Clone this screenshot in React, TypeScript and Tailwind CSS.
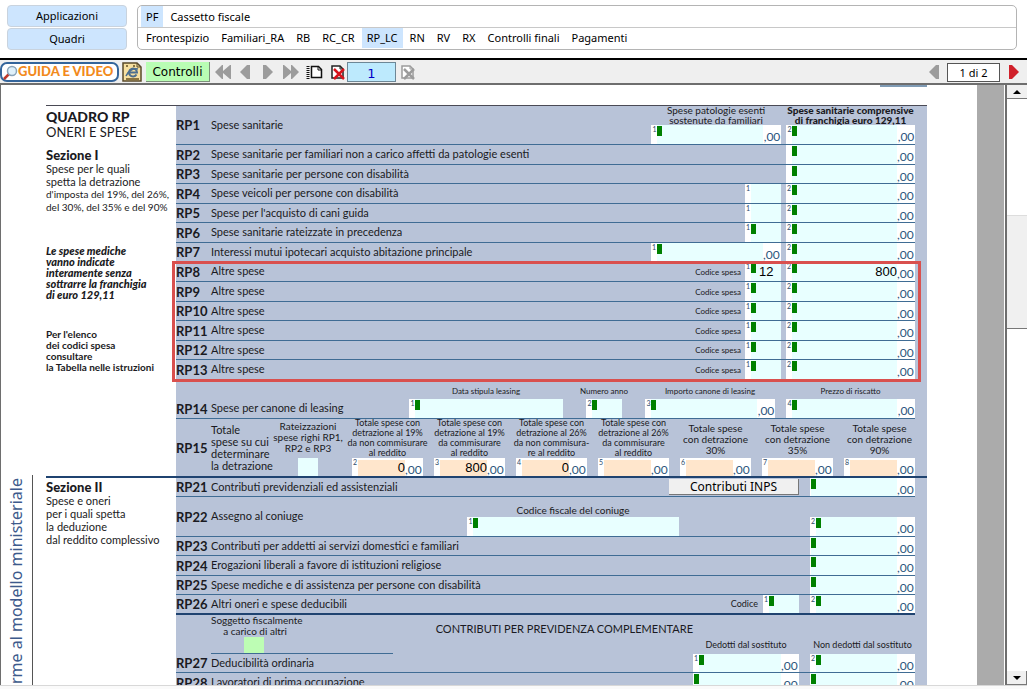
import type { ReactNode } from "react";

const MENU = ["PF", "Cassetto fiscale"];
const TABS = [
  "Frontespizio",
  "Familiari_RA",
  "RB",
  "RC_CR",
  "RP_LC",
  "RN",
  "RV",
  "RX",
  "Controlli finali",
  "Pagamenti",
];

const EXPENSES = [
  { code: "RP8", height: "h-5", codice: "12", amount: "800" },
  { code: "RP9", height: "h-5" },
  { code: "RP10", height: "h-[19px]" },
  { code: "RP11", height: "h-5" },
  { code: "RP12", height: "h-[19px]" },
  { code: "RP13", height: "h-5" },
];

const TOTALS = [
  { n: "2", value: "0", lines: ["Totale spese con", "detrazione al 19%", "da non commisurare", "al reddito"] },
  { n: "3", value: "800", lines: ["Totale spese con", "detrazione al 19%", "da commisurare", "al reddito"] },
  { n: "4", value: "0", lines: ["Totale spese con", "detrazione al 26%", "da non commisura-", "re al reddito"] },
  { n: "5", value: "", lines: ["Totale spese con", "detrazione al 26%", "da commisurare", "al reddito"] },
  { n: "6", value: "", lines: ["Totale spese", "con detrazione", "30%"] },
  { n: "7", value: "", lines: ["Totale spese", "con detrazione", "35%"] },
  { n: "8", value: "", lines: ["Totale spese", "con detrazione", "90%"] },
];

type FieldProps = {
  label: string;
  width: string;
  n?: string;
  value?: string;
  marker?: boolean;
  cents?: boolean;
  flush?: boolean;
};

function Field({ label, width, n, value, marker = true, cents = true, flush }: FieldProps) {
  return (
    <div className={`flex h-[19px] max-h-full shrink-0 bg-white ${width}`}>
      <span className={`shrink-0 pl-px text-[7px] leading-[8px] text-[#2b4a6b] ${flush ? "w-px" : "w-[6px]"}`}>{n}</span>
      <div className="flex min-w-0 flex-1 bg-[#e8ffff]">
        {marker && <span className="mt-px h-[10px] w-[5px] shrink-0 bg-[#008000]" />}
        <input
          aria-label={label}
          defaultValue={value}
          className={`w-full min-w-0 bg-transparent font-['Liberation_Sans',sans-serif] text-[13px] text-black outline-none ${
            cents ? "text-right" : "pl-[3px]"
          }`}
        />
      </div>
      {cents && <Cents />}
    </div>
  );
}

function Cents() {
  return <span className="w-[18px] shrink-0 pt-[5px] text-[12px] leading-[14px] text-[#2b567d]">,00</span>;
}

function TotalField({ label, n, value }: { label: string; n: string; value: string }) {
  return (
    <div className="flex h-[18px] w-[71px] bg-white">
      <span className="w-[6px] shrink-0 pl-px text-[7px] leading-[8px] text-[#2b4a6b]">{n}</span>
      <input
        aria-label={label}
        defaultValue={value}
        className="mt-[2px] w-full min-w-0 bg-[#ffe6cc] text-right font-['Liberation_Sans',sans-serif] text-[13px] text-black outline-none"
      />
      <Cents />
    </div>
  );
}

type RowProps = {
  code: string;
  label: string;
  height: string;
  line?: string;
  children?: ReactNode;
};

function Row({ code, label, height, line = "border-b border-[#3f6c94]", children }: RowProps) {
  return (
    <div className={`flex items-end ${height} ${line}`}>
      <div className="flex flex-1 items-center self-stretch">
        <span className="w-[35px] shrink-0 text-[13px] font-bold leading-[18px]">{code}</span>
        <span className="whitespace-nowrap text-[11px]">{label}</span>
      </div>
      {children}
    </div>
  );
}

function Titled({ title, className = "", children }: { title: ReactNode; className?: string; children: ReactNode }) {
  return (
    <div className={`flex flex-col items-center whitespace-nowrap text-center ${className}`}>
      <div>{title}</div>
      {children}
    </div>
  );
}

function Arrow({ left, double, className }: { left?: boolean; double?: boolean; className: string }) {
  const width = double ? 16 : 10;
  return (
    <svg width={width} height="14" viewBox={`0 0 ${width} 14`} className={className} fill="currentColor">
      <g transform={left ? `translate(${width} 0) scale(-1 1)` : undefined}>
        {double ? <path d="M0 0h1l7 6V0h1l7 7-7 7H8V8l-7 6H0z" /> : <path d="M0 0h3l7 7-7 7H0z" />}
      </g>
    </svg>
  );
}

function PageCrossIcon({ page, cross }: { page: string; cross: string }) {
  return (
    <svg width="15" height="15" viewBox="0 0 15 15" fill="none">
      <path d="M1 1h8l3 3v9H1z" fill="#fff" stroke={page} strokeWidth="1.5" />
      <path d="M9 1v3h3" stroke={page} />
      <path d="M3 4l10 10M13 4L3 14" stroke={cross} strokeWidth="2.5" />
    </svg>
  );
}

function Header() {
  return (
    <header className="flex h-[58px] shrink-0 gap-[10px] bg-white pl-[7px] pr-[10px] pt-[5px] font-['Noto_Sans',sans-serif] text-[11px] leading-[16px] text-black">
      <div className="flex w-[120px] shrink-0 flex-col gap-px">
        <button className="h-[22px] rounded-[4px] border border-[#c9d3de] bg-[#cde5fe]">Applicazioni</button>
        <button className="h-[22px] rounded-[4px] border border-[#c9d3de] bg-[#cde5fe]">Quadri</button>
      </div>
      <nav className="h-[45px] flex-1 rounded-[5px] border border-[#b4b4b4]">
        <div className="flex h-[22px] items-end gap-[2px] border-b border-[#c8c8c8] pl-[3px]">
          {MENU.map((item) => (
            <a key={item} href="#" className={`px-[5px] pb-[2px] pt-[3px] ${item === "PF" ? "bg-[#cde5fe]" : ""}`}>
              {item}
            </a>
          ))}
        </div>
        <div className="flex gap-[2px] pl-[3px]">
          {TABS.map((item) => (
            <a key={item} href="#" className={`px-[5px] py-[2px] ${item === "RP_LC" ? "bg-[#cde5fe]" : ""}`}>
              {item}
            </a>
          ))}
        </div>
      </nav>
    </header>
  );
}

function Toolbar() {
  return (
    <div className="flex h-[27px] shrink-0 items-center border-b-2 border-t-2 border-b-[#6e6e6e] border-t-black bg-[#efefef] pt-px font-['DejaVu_Sans',sans-serif]">
      <button className="flex h-5 w-[119px] items-center whitespace-nowrap rounded-[7px] border-2 border-[#34659b] bg-white pl-px font-['Lato',sans-serif] text-[13px] font-black text-[#f28a1c]">
        <svg width="15" height="15" viewBox="0 0 15 15" fill="none">
          <path d="M1 14l5-5" stroke="#c0392b" strokeWidth="2.5" />
          <circle cx="9" cy="6" r="4.5" fill="#dff1fb" stroke="#8aa4b8" strokeWidth="1.5" />
        </svg>
        GUIDA E VIDEO
      </button>
      <button aria-label="Pagina web" className="ml-[3px]">
        <svg width="20" height="20" viewBox="0 0 20 20" fill="none">
          <path d="M1 1h14l4 4v14H1z" fill="#f7e0a0" stroke="#5a4a2a" strokeWidth="1.5" />
          <path d="M4 4h2M11 4h2M4 17h13" stroke="#8a7440" strokeWidth="2" />
          <path d="M15 1v4h4" stroke="#5a4a2a" />
          <path d="M14.500 12.500a4 4 0 1 1 .5-2H7.500" stroke="#4d6f8f" strokeWidth="2" />
          <path d="M4 14c2-5 7-8 12-7" stroke="#4d6f8f" strokeWidth="1.500" />
        </svg>
      </button>
      <button className="ml-1 h-5 w-[64px] border-b border-r border-[#7c8f7a] bg-[#b9fdb4] pt-px text-[12px] text-black">
        Controlli
      </button>
      <button aria-label="Prima pagina" className="ml-[5px] text-[#9c9c9c]">
        <Arrow left double className="block" />
      </button>
      <button aria-label="Pagina precedente" className="ml-[9px] text-[#9c9c9c]">
        <Arrow left className="block" />
      </button>
      <button aria-label="Pagina successiva" className="ml-[13px] text-[#9c9c9c]">
        <Arrow className="block" />
      </button>
      <button aria-label="Ultima pagina" className="ml-[10px] text-[#9c9c9c]">
        <Arrow double className="block" />
      </button>
      <button aria-label="Nuovo modulo" className="ml-[7px]">
        <svg width="17" height="15" viewBox="0 0 17 15" fill="none" stroke="#111">
          <path d="M5.500 1.500h7l3 3v8h-10z" fill="#fff" strokeWidth="1.500" />
          <path d="M12 1v4h4" />
          <path d="M2 1v13" strokeWidth="3" strokeDasharray="1 1" />
        </svg>
      </button>
      <button aria-label="Elimina modulo" className="ml-[8px]">
        <PageCrossIcon page="#222" cross="#d8141c" />
      </button>
      <input
        aria-label="Modulo"
        defaultValue="1"
        className="ml-px h-5 w-[49px] border border-[#6d8796] bg-[#bdeafd] pt-[3px] text-center text-[13px] text-[#0000c8] outline-none"
      />
      <button aria-label="Elimina tutti" className="ml-[5px]">
        <PageCrossIcon page="#9c9c9c" cross="#9c9c9c" />
      </button>
      <div className="ml-auto flex items-center pr-[8px]">
        <button aria-label="Foglio precedente" className="text-[#9c9c9c]">
          <Arrow left className="block" />
        </button>
        <input
          aria-label="Foglio"
          defaultValue="1 di 2"
          className="ml-[8px] h-[19px] w-[53px] border border-[#555] bg-white text-center font-['Noto_Sans',sans-serif] text-[11px] text-black outline-none"
        />
        <button aria-label="Foglio successivo" className="ml-[9px] text-[#d0202a]">
          <Arrow className="block" />
        </button>
      </div>
    </div>
  );
}

function SectionOne() {
  return (
    <section className="flex border-t border-[#4a4a55]">
      <div className="w-[130px] shrink-0 whitespace-nowrap pt-[3px]">
        <h1 className="text-[14px] font-black leading-[16px]">QUADRO RP</h1>
        <p className="text-[13px] leading-[15px]">ONERI E SPESE</p>
        <h2 className="mt-2 text-[13px] font-black leading-[14px]">Sezione I</h2>
        <p className="text-[11px] leading-[13px]">
          Spese per le quali
          <br />
          spetta la detrazione
        </p>
        <p className="text-[10px] leading-[13px]">
          d'imposta del 19%, del 26%,
          <br />
          del 30%, del 35% e del 90%
        </p>
        <p className="mt-[31px] text-[11px] font-black italic leading-[11px]">
          Le spese mediche
          <br />
          vanno indicate
          <br />
          interamente senza
          <br />
          sottrarre la franchigia
          <br />
          di euro 129,11
        </p>
        <p className="mt-[29px] text-[10px] font-bold leading-[11px]">
          Per l'elenco
          <br />
          dei codici spesa
          <br />
          consultare
          <br />
          la Tabella nelle istruzioni
        </p>
      </div>
      <div className="flex-1 bg-[#b8c3d8] pr-3">
        <Row code="RP1" label="Spese sanitarie" height="h-[39px]">
          <div className="flex gap-[5px] text-[10px] leading-[10px]">
            <Titled title={<>Spese patologie esenti<br />sostenute da familiari</>}>
              <Field label="RP1 patologie esenti" n="1" width="w-[130px]" />
            </Titled>
            <Titled title={<>Spese sanitarie comprensive<br />di franchigia euro 129,11</>} className="w-[129px] font-black">
              <Field label="RP1 spese sanitarie" n="2" width="w-[129px] font-normal" />
            </Titled>
          </div>
        </Row>
        <Row code="RP2" label="Spese sanitarie per familiari non a carico affetti da patologie esenti" height="h-5">
          <Field label="RP2" width="w-[129px]" />
        </Row>
        <Row code="RP3" label="Spese sanitarie per persone con disabilità" height="h-[19px]">
          <Field label="RP3" width="w-[129px]" />
        </Row>
        <Row code="RP4" label="Spese veicoli per persone con disabilità" height="h-5">
          <div className="flex h-full gap-[5px]">
            <Field label="RP4 rata" n="1" width="w-9" marker={false} cents={false} />
            <Field label="RP4 importo" n="2" width="w-[129px]" />
          </div>
        </Row>
        <Row code="RP5" label="Spese per l'acquisto di cani guida" height="h-[19px]">
          <div className="flex h-full gap-[5px]">
            <Field label="RP5 rata" n="1" width="w-9" marker={false} cents={false} />
            <Field label="RP5 importo" n="2" width="w-[129px]" />
          </div>
        </Row>
        <Row code="RP6" label="Spese sanitarie rateizzate in precedenza" height="h-5">
          <div className="flex h-full gap-[5px]">
            <Field label="RP6 rata" n="1" width="w-9" cents={false} />
            <Field label="RP6 importo" n="2" width="w-[129px]" />
          </div>
        </Row>
        <Row code="RP7" label="Interessi mutui ipotecari acquisto abitazione principale" height="h-[19px]">
          <div className="flex h-full gap-[5px]">
            <Field label="RP7 interessi" n="1" width="w-[130px]" />
            <Field label="RP7 importo" n="2" width="w-[129px]" />
          </div>
        </Row>
        <div className="relative">
          {EXPENSES.map((row) => (
            <Row key={row.code} code={row.code} label="Altre spese" height={row.height}>
              <span className="mr-1 self-center text-[8px]">Codice spesa</span>
              <div className="flex h-full gap-[5px]">
                <Field label={`${row.code} codice spesa`} n="1" value={row.codice} width="w-9" cents={false} />
                <Field label={`${row.code} importo`} n="2" value={row.amount} width="w-[129px]" />
              </div>
            </Row>
          ))}
          <div className="pointer-events-none absolute -bottom-[2px] -left-1 -right-[6px] -top-px border-[3px] border-[#d9504e]" />
        </div>
        <div className="flex h-[39px] items-end border-b border-[#3f6c94]">
          <div className="flex h-[19px] flex-1 items-center">
            <span className="w-[35px] shrink-0 text-[13px] font-bold leading-[18px]">RP14</span>
            <span className="whitespace-nowrap text-[11px]">Spese per canone di leasing</span>
          </div>
          <div className="flex text-[8px] leading-[15px]">
            <Titled title="Data stipula leasing">
              <Field label="Data stipula leasing" n="1" width="w-[154px]" cents={false} />
            </Titled>
            <Titled title="Numero anno" className="ml-[23px] w-9">
              <Field label="Numero anno" n="2" width="w-9" cents={false} />
            </Titled>
            <Titled title="Importo canone di leasing" className="ml-[23px]">
              <Field label="Importo canone di leasing" n="3" width="w-[130px]" />
            </Titled>
            <Titled title="Prezzo di riscatto" className="ml-[11px]">
              <Field label="Prezzo di riscatto" n="4" width="w-[129px]" />
            </Titled>
          </div>
        </div>
        <div className="flex h-[57px] items-end">
          <span className="w-[35px] shrink-0 self-center text-[13px] font-bold leading-[18px]">RP15</span>
          <span className="flex-1 self-center whitespace-nowrap text-[11px] leading-[12px]">
            Totale
            <br />
            spese su cui
            <br />
            determinare
            <br />
            la detrazione
          </span>
          <label className="mr-[11px] flex w-[66px] flex-col items-center whitespace-nowrap text-center text-[10px] leading-[11px]">
            Rateizzazioni
            <br />
            spese righi RP1,
            <br />
            RP2 e RP3
            <input type="checkbox" className="mt-1 h-[18px] w-5 appearance-none bg-[#e8ffff]" />
          </label>
          <div className="flex gap-[11px]">
            {TOTALS.map((total) => (
              <div key={total.n} className="flex w-[71px] flex-col items-center justify-end">
                <div
                  className={`whitespace-nowrap text-center ${
                    total.lines.length === 4 ? "text-[9px] leading-[10px]" : "pb-[2px] text-[10px] leading-[11px]"
                  }`}
                >
                  {total.lines.map((line) => (
                    <div key={line}>{line}</div>
                  ))}
                </div>
                <TotalField label={total.lines.join(" ")} n={total.n} value={total.value} />
              </div>
            ))}
          </div>
        </div>
      </div>
    </section>
  );
}

function SectionTwo() {
  return (
    <section className="flex border-t-2 border-[#1f4370]">
      <div className="w-[130px] shrink-0 whitespace-nowrap pt-[2px]">
        <h2 className="text-[13px] font-black leading-[14px]">Sezione II</h2>
        <p className="text-[11px] leading-[13px]">
          Spese e oneri
          <br />
          per i quali spetta
          <br />
          la deduzione
          <br />
          dal reddito complessivo
        </p>
      </div>
      <div className="flex-1 bg-[#b8c3d8] pr-3">
        <Row code="RP21" label="Contributi previdenziali ed assistenziali" height="h-[19px]">
          <button className="mr-[11px] h-4 w-[130px] self-center border-b border-r border-[#777] bg-[#f0f0f0] font-['Noto_Sans',sans-serif] text-[12px] leading-[15px] text-black">
            Contributi INPS
          </button>
          <Field label="RP21" width="w-[105px]" flush />
        </Row>
        <Row code="RP22" label="Assegno al coniuge" height="h-10">
          <Titled title="Codice fiscale del coniuge" className="mr-[131px] text-[10px] leading-[14px]">
            <Field label="Codice fiscale del coniuge" n="1" width="w-[212px]" cents={false} />
          </Titled>
          <Field label="RP22 importo" n="2" width="w-[105px]" />
        </Row>
        <Row code="RP23" label="Contributi per addetti ai servizi domestici e familiari" height="h-[19px]">
          <Field label="RP23" width="w-[105px]" flush />
        </Row>
        <Row code="RP24" label="Erogazioni liberali a favore di istituzioni religiose" height="h-5">
          <Field label="RP24" width="w-[105px]" flush />
        </Row>
        <Row code="RP25" label="Spese mediche e di assistenza per persone con disabilità" height="h-[19px]">
          <Field label="RP25" width="w-[105px]" flush />
        </Row>
        <Row code="RP26" label="Altri oneri e spese deducibili" height="h-5" line="border-b-2 border-[#1f4370]">
          <span className="mr-[5px] self-center text-[9px]">Codice</span>
          <div className="flex h-full gap-[11px]">
            <Field label="RP26 codice" n="1" width="w-9" cents={false} />
            <Field label="RP26 importo" n="2" width="w-[105px]" />
          </div>
        </Row>
        <div className="flex h-[39px] pl-[35px]">
          <label className="flex w-[182px] flex-col border-b border-[#3f6c94] text-center text-[10px] leading-[11px]">
            <span className="w-[88px] whitespace-nowrap">
              Soggetto fiscalmente
              <br />a carico di altri
            </span>
            <input type="checkbox" className="ml-[33px] h-4 w-5 shrink-0 appearance-none bg-[#bdfdb4]" />
          </label>
          <h3 className="ml-auto whitespace-nowrap pt-[6px] text-[11px] leading-[15px]">
            CONTRIBUTI PER PREVIDENZA COMPLEMENTARE
          </h3>
          <div className="flex items-end gap-[11px] whitespace-nowrap pb-[3px] text-center text-[9px] leading-[13px]">
            <span className="w-[106px]">Dedotti dal sostituto</span>
            <span className="w-[105px]">Non dedotti dal sostituto</span>
          </div>
        </div>
        <Row code="RP27" label="Deducibilità ordinaria" height="h-[19px]">
          <div className="flex h-full gap-[11px]">
            <Field label="RP27 dedotti dal sostituto" n="1" width="w-[106px]" />
            <Field label="RP27 non dedotti dal sostituto" n="2" width="w-[105px]" />
          </div>
        </Row>
        <Row code="RP28" label="Lavoratori di prima occupazione" height="h-5">
          <div className="flex h-full gap-[11px]">
            <Field label="RP28 dedotti dal sostituto" width="w-[106px]" flush />
            <Field label="RP28 non dedotti dal sostituto" width="w-[105px]" flush />
          </div>
        </Row>
      </div>
    </section>
  );
}

function Scrollbar() {
  return (
    <div className="flex w-[22px] shrink-0 flex-col border-l-2 border-[#6e6e6e] bg-white">
      <button aria-label="Su" className="flex h-[14px] items-center justify-center border-b border-[#777] bg-[#f0f0f0]">
        <svg width="8" height="4" viewBox="0 0 8 4">
          <path d="M4 0l4 4H0z" />
        </svg>
      </button>
      <div className="mt-[116px] h-[114px] border-b border-t border-b-[#777] border-t-[#ddd] bg-[#f0f0f0]" />
      <button
        aria-label="Giù"
        className="mt-auto flex h-[14px] items-center justify-center border-b border-r border-[#777] bg-[#f0f0f0]"
      >
        <svg width="8" height="4" viewBox="0 0 8 4">
          <path d="M0 0h8L4 4z" />
        </svg>
      </button>
    </div>
  );
}

export default function App() {
  return (
    <div className="flex h-screen flex-col overflow-hidden bg-white text-[#1a1a22]">
      <Header />
      <Toolbar />
      <div className="flex min-h-0 flex-1 border-l border-[#6e6e6e]">
        <main className="flex min-w-0 flex-1 overflow-hidden font-['Lato',sans-serif]">
          <div className="mt-[390px] flex w-8 shrink-0 flex-col items-center border-r border-[#555] pr-[2px]">
            <p className="rotate-180 whitespace-nowrap pb-[3px] font-['Noto_Sans',sans-serif] text-[16px] leading-[20px] text-[#3d5a8c] [writing-mode:vertical-rl]">
              rme al modello ministeriale
            </p>
          </div>
          <div className="ml-[13px] mr-[50px] min-w-0 flex-1">
            <div className="mb-[18px] ml-auto h-[2px] w-[47px] bg-[#7f9bb5]" />
            <SectionOne />
            <SectionTwo />
          </div>
        </main>
        <div className="mr-px w-[27px] shrink-0 bg-[#ababab]" />
        <Scrollbar />
      </div>
      <footer className="h-1 shrink-0 border-t border-[#d8d8d8] bg-[#fafafa]" />
    </div>
  );
}
